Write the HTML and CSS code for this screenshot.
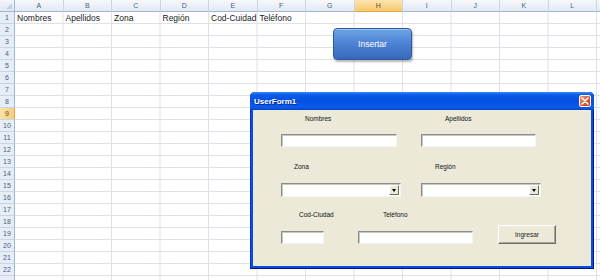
FILE: index.html
```html
<!DOCTYPE html>
<html lang="es">
<head>
<meta charset="utf-8">
<title>Excel UserForm</title>
<link rel="stylesheet" href="styles.css">
</head>
<body>
<div class="sheet">
  <div class="corner"><span class="tri"></span></div>
  <div class="colhdrs">
    <div class="ch">A</div><div class="ch">B</div><div class="ch">C</div><div class="ch">D</div>
    <div class="ch">E</div><div class="ch">F</div><div class="ch">G</div><div class="ch sel">H</div>
    <div class="ch">I</div><div class="ch">J</div><div class="ch">K</div><div class="ch">L</div>
    <div class="ch"></div>
  </div>
  <div class="rowhdrs">
    <div class="rh">1</div><div class="rh">2</div><div class="rh">3</div><div class="rh">4</div>
    <div class="rh">5</div><div class="rh">6</div><div class="rh">7</div><div class="rh">8</div>
    <div class="rh sel">9</div><div class="rh">10</div><div class="rh">11</div><div class="rh">12</div>
    <div class="rh">13</div><div class="rh">14</div><div class="rh">15</div><div class="rh">16</div>
    <div class="rh">17</div><div class="rh">18</div><div class="rh">19</div><div class="rh">20</div>
    <div class="rh">21</div><div class="rh">22</div><div class="rh"></div>
  </div>
  <div class="cells">
    <div class="row1">
      <div class="cell">Nombres</div>
      <div class="cell">Apellidos</div>
      <div class="cell">Zona</div>
      <div class="cell">Región</div>
      <div class="cell">Cod-Cuidad</div>
      <div class="cell">Teléfono</div>
    </div>
  </div>
</div>

<button class="insertar">Insertar</button>

<div class="userform">
  <div class="titlebar">
    <span class="title">UserForm1</span>
    <span class="close">
      <svg width="8" height="8" viewBox="0 0 8 8"><path d="M1 1 L7 7 M7 1 L1 7" stroke="#fff" stroke-width="1.6" stroke-linecap="round"/></svg>
    </span>
  </div>
  <div class="formbody">
    <div class="frow labels r1">
      <span class="lbl w-nombres">Nombres</span>
      <span class="lbl">Apellidos</span>
    </div>
    <div class="frow inputs r2">
      <div class="tbox w116"></div>
      <div class="tbox w115"></div>
    </div>
    <div class="frow labels r3">
      <span class="lbl w-zona">Zona</span>
      <span class="lbl">Región</span>
    </div>
    <div class="frow inputs r4">
      <div class="combo"><span class="drop"><span class="arrow"></span></span></div>
      <div class="combo"><span class="drop"><span class="arrow"></span></span></div>
    </div>
    <div class="frow labels r5">
      <span class="lbl w-cod">Cod-Ciudad</span>
      <span class="lbl">Teléfono</span>
    </div>
    <div class="frow r6">
      <div class="tbox w43 low"></div>
      <div class="tbox w115 low tel"></div>
      <button class="ingresar">Ingresar</button>
    </div>
  </div>
</div>
</body>
</html>
```

FILE: styles.css
```css
* { box-sizing: border-box; }
html, body {
  margin: 0;
  padding: 0;
  width: 600px;
  height: 280px;
  overflow: hidden;
  background: #fff;
  font-family: "Liberation Sans", Arial, sans-serif;
}

.sheet {
  display: grid;
  grid-template-columns: 15px 630.5px;
  grid-template-rows: 12px 276px;
  width: 600px;
  height: 288px;
  overflow: hidden;
}

.corner {
  background: linear-gradient(#f3f6fb, #dfe7f2);
  border-right: 1px solid #9eb6ce;
  border-bottom: 1px solid #9eb6ce;
  position: relative;
}
.corner .tri {
  position: absolute;
  right: 2px;
  bottom: 2px;
  width: 0;
  height: 0;
  border-left: 6px solid transparent;
  border-bottom: 6px solid #c3cfdf;
}

.colhdrs {
  display: grid;
  grid-template-columns: repeat(13, 48.5px);
}
.ch {
  background: linear-gradient(#f6f9fc, #e2e9f3);
  border-right: 1px solid #c9d5e4;
  border-bottom: 1px solid #9eb6ce;
  color: #4a5f7f;
  font-size: 7px;
  line-height: 11px;
  text-align: center;
}
.ch.sel {
  background: linear-gradient(#fbe6b0, #f7c86e);
  border-bottom-color: #e3a548;
  color: #5a4a2a;
}

.rowhdrs {
  display: flex;
  flex-direction: column;
}
.rh {
  height: 12px;
  background: #e6edf7;
  border-right: 1px solid #9eb6ce;
  border-bottom: 1px solid #c9d5e4;
  color: #4a5f7f;
  font-size: 7px;
  line-height: 11px;
  text-align: center;
}
.rh.sel {
  background: linear-gradient(90deg, #fbe2a6, #f8cc78);
  border-right-color: #e3a548;
  color: #5a4a2a;
}

.cells {
  background-image:
    linear-gradient(to right, transparent 47.5px, #dde2e9 47.5px),
    linear-gradient(to bottom, transparent 11px, #dde2e9 11px);
  background-size: 48.5px 12px, 48.5px 12px;
}
.row1 {
  display: grid;
  grid-template-columns: repeat(13, 48.5px);
  height: 12px;
}
.cell {
  font-size: 8.5px;
  line-height: 12px;
  color: #1a1a1a;
  padding-left: 2px;
  white-space: nowrap;
}

/* Insertar shape button (floats over the sheet) */
.insertar {
  position: absolute;
  left: 333px;
  top: 28px;
  width: 79px;
  height: 32px;
  margin: 0;
  padding: 0;
  border: 1px solid #2c5aa0;
  border-radius: 4px;
  background: linear-gradient(#6fa2e6, #4c82d3 50%, #3669ba);
  box-shadow: 1px 2px 2px rgba(0, 0, 0, 0.28), inset 0 1px 0 rgba(255, 255, 255, 0.35);
  color: #fff;
  font-family: "Liberation Sans", Arial, sans-serif;
  font-size: 8.5px;
  text-align: center;
}

/* UserForm window (floats over the sheet) */
.userform {
  position: absolute;
  left: 250px;
  top: 92px;
  width: 344px;
  height: 177px;
  display: flex;
  flex-direction: column;
  border-radius: 5px 5px 0 0;
  background: #0a4fd9;
  padding: 0 3px 3px 3px;
  box-shadow: inset 0 -1px 0 #00138c, inset 1px 0 0 #0831d9, inset -1px 0 0 #00138c;
}
.titlebar {
  height: 18px;
  display: flex;
  align-items: center;
  justify-content: space-between;
  margin: 0 -3px;
  padding: 0 3px 0 4px;
  border-radius: 5px 5px 0 0;
  background: linear-gradient(#3d8bf7 0%, #0b5be8 15%, #0550e2 50%, #0a5cea 85%, #0443c9 100%);
}
.title {
  color: #fff;
  font-size: 8px;
  font-weight: bold;
  text-shadow: 1px 1px 0 #0a2a8a;
}
.close {
  width: 12px;
  height: 12px;
  display: flex;
  align-items: center;
  justify-content: center;
  border: 1px solid #fff;
  border-radius: 2px;
  background: linear-gradient(135deg, #ee9676, #d85a32 55%, #c2421f);
}

.formbody {
  flex: 1;
  background: #ece9d8;
  padding: 3px 0 0 0;
  display: flex;
  flex-direction: column;
}
.frow {
  display: flex;
  align-items: flex-start;
}
.lbl {
  font-size: 6.5px;
  line-height: 12px;
  color: #111;
  white-space: nowrap;
}

.r1 { padding-left: 52px; }
.w-nombres { width: 140px; }
.r2 { margin-top: 9px; padding-left: 28px; gap: 24px; }
.r3 { margin-top: 14px; padding-left: 41px; }
.w-zona { width: 141px; }
.r4 { margin-top: 10px; padding-left: 28px; gap: 20px; }
.r5 { margin-top: 12px; padding-left: 46px; }
.w-cod { width: 84px; }
.r6 { margin-top: 4px; padding-left: 28px; }

.tbox {
  height: 13px;
  background: #fff;
  border: 1px solid;
  border-color: #8c8c8c #f4f4f4 #f4f4f4 #8c8c8c;
  box-shadow: inset 1px 1px 0 #c9c7bb;
}
.w116 { width: 116px; }
.w115 { width: 115px; }
.w43 { width: 43px; }
.low { margin-top: 6px; }
.tel { margin-left: 34px; }

.combo {
  width: 120px;
  height: 14px;
  background: #fff;
  border: 1px solid;
  border-color: #8c8c8c #f4f4f4 #f4f4f4 #8c8c8c;
  box-shadow: inset 1px 1px 0 #c9c7bb;
  display: flex;
  justify-content: flex-end;
  padding: 1px;
}
.drop {
  width: 10px;
  height: 10px;
  background: #ece9d8;
  border: 1px solid;
  border-color: #fff #6e6d66 #6e6d66 #fff;
  display: flex;
  align-items: center;
  justify-content: center;
}
.arrow {
  width: 0;
  height: 0;
  border-left: 2.5px solid transparent;
  border-right: 2.5px solid transparent;
  border-top: 3px solid #000;
}

.ingresar {
  margin: 0 0 0 25px;
  padding: 0;
  width: 58px;
  height: 19px;
  background: #ece9d8;
  border: 1px solid;
  border-color: #fff #6e6d66 #6e6d66 #fff;
  box-shadow: inset -1px -1px 0 #aca899;
  font-family: "Liberation Sans", Arial, sans-serif;
  font-size: 6.5px;
  color: #1c1c1c;
}
```
